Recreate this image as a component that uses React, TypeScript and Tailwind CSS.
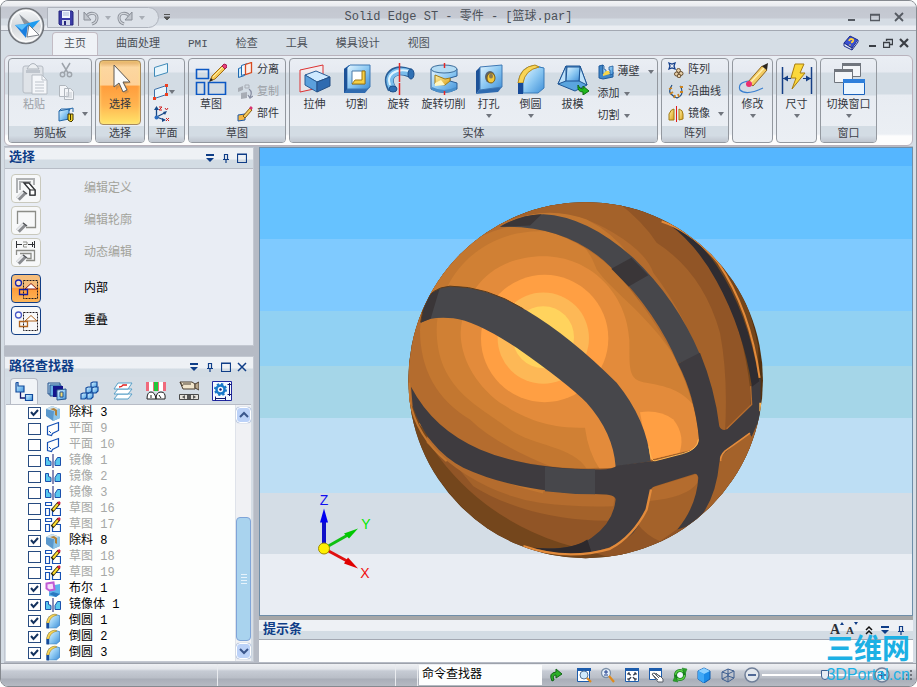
import React, { useState } from 'react';

type IconProps = { className?: string };
type Draw = (props: IconProps) => React.ReactElement;

const SMALL = 'h-4 w-4';

function Svg({ size = 16, className = SMALL, children }: { size?: number; className?: string; children: React.ReactNode }) {
  return (
    <svg viewBox={`0 0 ${size} ${size}`} className={`${className} flex-shrink-0`} fill="none" aria-hidden="true">
      {children}
    </svg>
  );
}

// ---- shared gradients ----
function Gradients() {
  return (
    <svg className="absolute h-0 w-0" aria-hidden="true">
      <defs>
        <linearGradient id="blue" x1="0" y1="0" x2="1" y2="1">
          <stop offset="0" stopColor="#e4f5ff" />
          <stop offset="0.5" stopColor="#8cc8f2" />
          <stop offset="1" stopColor="#3f8fd8" />
        </linearGradient>
        <linearGradient id="gold" x1="0" y1="0" x2="1" y2="1">
          <stop offset="0" stopColor="#fff3a8" />
          <stop offset="1" stopColor="#dba21c" />
        </linearGradient>
        <linearGradient id="silver" x1="0" y1="0" x2="0" y2="1">
          <stop offset="0" stopColor="#f6f8fa" />
          <stop offset="0.5" stopColor="#d4d8dc" />
          <stop offset="1" stopColor="#f4f4f4" />
        </linearGradient>
      </defs>
    </svg>
  );
}

// ---- title bar icons ----
const LogoIcon: Draw = () => (
  <svg viewBox="0 0 38 38" className="h-[38px] w-[38px]" aria-hidden="true">
    <circle cx="19" cy="19" r="17.5" fill="url(#silver)" stroke="#73777d" strokeWidth="1.6" />
    <circle cx="19" cy="19" r="15.5" fill="none" stroke="#fff" />
    <path d="M12 7l11 9-5 3z" fill="#8d9299" />
    <path d="M18 17l15-4-8 9-4-2z" fill="#1e9cf0" />
    <path d="M8 18l13-1-2 14z" fill="#1a7fe0" />
    <path d="M8 18l13-1-6 6z" fill="#5cc0fa" />
    <path d="M22 18l10 10-12 2z" fill="#fff" stroke="#60666e" strokeWidth=".8" />
  </svg>
);

const SaveIcon: Draw = () => (
  <Svg>
    <path d="M1 1h13l1 1v13H2l-1-1z" fill="#3c3ca8" stroke="#25257c" />
    <path d="M4 1h8v7H4z" fill="#f2f6ff" />
    <path d="M5 3h6M5 5h6" stroke="#a9b6d8" />
    <path d="M4 10h8v5H4z" fill="#d3d9ea" />
    <path d="M6 11h2v4H6z" fill="#25257c" />
  </Svg>
);

const UndoIcon: Draw = ({ className = SMALL }) => (
  <Svg className={className}>
    <path d="M3 7c4-6 11-4 11 1 0 3-2 5-5 6" stroke="#8a8f98" strokeWidth="3" />
    <path d="M3 7c4-6 11-4 11 1 0 3-2 5-5 6" stroke="#d2d6dc" strokeWidth="1.2" />
    <path d="M1 2v8h7z" fill="#c2c7ce" stroke="#8a8f98" />
  </Svg>
);

const HelpIcon: Draw = () => (
  <Svg>
    <path d="M1 8l6-7 8 4-6 8z" fill="#3b50d0" stroke="#1b2b8c" />
    <path d="M1 8v3l8 4v-2zM9 15l6-8V5" fill="#dfe6f6" stroke="#1b2b8c" />
    <path d="M6 6q1-3 4-1.500q1 2-2 3M7 9.500v1" stroke="#ffd23c" strokeWidth="1.800" />
  </Svg>
);

// ---- ribbon icons, large ----
const PasteIcon: Draw = () => (
  <Svg size={32} className="h-8 w-8">
    <rect x="5" y="3" width="20" height="27" rx="2" fill="#dfe3e8" stroke="#b5bbc3" />
    <path d="M8 7h14v3H8z" fill="#bfc5cd" />
    <path d="M11 3q4-5 8 0l2 3H9z" fill="#eceff2" stroke="#aeb4bc" />
    <path d="M14 12h10l5 5v14H14z" fill="#f5f7fa" stroke="#b5bbc3" />
    <path d="M24 12v5h5M17 19h9M17 22h9M17 25h9M17 28h9" stroke="#bdc3cb" />
  </Svg>
);

const ArrowIcon: Draw = () => (
  <Svg size={32} className="h-8 w-8">
    <path d="M11 3v23l5-5 4 9 4-2-4-8 6-1z" fill="#c88a46" opacity=".6" transform="translate(1 1)" />
    <path d="M10 2v22l5-4 4 9 4-2-4-8h7z" fill="#fafafa" stroke="#5e5a55" />
  </Svg>
);

const Pencil = () => (
  <g>
    <path d="M15 18l2-5L28 2l3 3-11 11z" fill="#f6cb5a" stroke="#a06a12" />
    <path d="M18 14L28 4" stroke="#fff0a8" />
    <path d="M27 3l2-2q3 0 3 3l-2 2z" fill="#e8407c" stroke="#a52050" />
    <path d="M14 19l2-4 2 2z" fill="#222" />
  </g>
);

const SketchIcon: Draw = () => (
  <Svg size={32} className="h-8 w-8">
    <path d="M1.500 6.500h12v9h-12zM1.500 19.500h8v12h-8zM13.500 19.500h17v12h-17z" stroke="#0c58c4" strokeWidth="1.600" />
    <Pencil />
  </Svg>
);

const ExtrudeIcon: Draw = () => (
  <Svg size={32} className="h-8 w-8">
    <path d="M1 7l23-5v22L1 29z" fill="#fdeeee" fillOpacity=".5" stroke="#dc3232" />
    <path d="M6 12l11-4 14 6-13 5z" fill="#cfeaff" stroke="#2b5f98" />
    <path d="M6 12l12 7v10L6 22z" fill="#5ba0dc" stroke="#2b5f98" />
    <path d="M18 19l13-5v9l-13 6z" fill="#2f6bb0" stroke="#244f84" />
  </Svg>
);

const CutIcon: Draw = () => (
  <Svg size={32} className="h-8 w-8">
    <path d="M3 6l5-4h21v22l-5 6H3z" fill="#2f6bb0" />
    <path d="M6 5l3-3h20v22l-3 2H6z" fill="url(#blue)" stroke="#3f78b4" />
    <path d="M3 6l3-2v22l-3 4z" fill="#1d5298" />
    <path d="M11 8h13v13H11z" fill="#fff" stroke="#4a7aa8" />
    <path d="M11 21l3-4h7V8h3v13z" fill="#f6cf44" stroke="#a27b14" />
  </Svg>
);

const RevolveIcon: Draw = () => (
  <Svg size={32} className="h-8 w-8">
    <path d="M9 26C1 12 12 4 27 10" stroke="#2a5f98" strokeWidth="9" />
    <path d="M9 25C2 13 12 5 27 10" stroke="#79bdec" strokeWidth="7" />
    <path d="M7 22C3 12 12 5 26 8" stroke="#dff4ff" strokeWidth="2" />
    <ellipse cx="28" cy="11" rx="3" ry="5" fill="#2f70b4" stroke="#1d4f8a" />
    <ellipse cx="10" cy="26" rx="4" ry="3" fill="#2f70b4" stroke="#1d4f8a" />
    <path d="M16.500 0v19M16.500 20v12" stroke="#e42828" strokeWidth="1.500" />
  </Svg>
);

const RevolveCutIcon: Draw = () => (
  <Svg size={32} className="h-8 w-8">
    <path d="M3 6v20q13 7 26 0v-6l-7-2v-3l7-2V6z" fill="url(#blue)" stroke="#2a5f98" />
    <ellipse cx="16" cy="6" rx="13" ry="4" fill="#b5dcf4" stroke="#3d6e9c" />
    <path d="M7 12l10 4 5-1v3l-5 4-10-1z" fill="url(#gold)" stroke="#a27b14" />
    <path d="M7 20l6-3 4 5-10 1z" fill="#fff6c0" />
    <path d="M4 24q12 6 24 0v3q-12 6-24 0z" fill="#4a8fca" />
    <path d="M16.500 0v5M16.500 28v4" stroke="#e42828" strokeWidth="1.500" />
  </Svg>
);

const HoleIcon: Draw = () => (
  <Svg size={32} className="h-8 w-8">
    <path d="M3 8l4-4v22l-4 5z" fill="#1d5298" />
    <path d="M3 31l4-5 22-2-4 5z" fill="#2f6bb0" />
    <path d="M7 4l22-2v22L7 27z" fill="url(#blue)" stroke="#3f78b4" />
    <ellipse cx="17" cy="14" rx="5" ry="6" fill="#59636e" />
    <ellipse cx="18" cy="15" rx="4" ry="5" fill="#f3c93c" stroke="#7e6013" />
    <ellipse cx="18" cy="13" rx="2" ry="2.500" fill="#8a7a50" />
  </Svg>
);

const RoundIcon: Draw = ({ className = 'h-8 w-8' }) => (
  <Svg size={32} className={className}>
    <path d="M3 30V18Q6 3 20 2l9 3v20l-9 5z" fill="#2f78c0" />
    <path d="M8 30V18Q10 6 24 4l5 1v20l-6 5z" fill="url(#blue)" stroke="#3a7cba" />
    <path d="M3 20Q5 4 20 2l4 2Q10 7 8 20z" fill="#f9d556" stroke="#b98c1c" />
    <path d="M3 20h5v11H3z" fill="#174a98" />
  </Svg>
);

const DraftIcon: Draw = () => (
  <Svg size={32} className="h-8 w-8">
    <path d="M9 3h14l7 19-12 6L1 21z" fill="#5aa5de" stroke="#1e5594" />
    <path d="M9 3L1 21l8-3zM23 3l7 19-8-4z" fill="#bfe2fa" stroke="#1e5594" />
    <path d="M10 4h13l-1 14H9z" fill="url(#blue)" stroke="#1e5594" />
    <path d="M21 22q1 4 5 4v-3l6 5-6 4v-3q-6 0-5-7z" fill="#20b81c" stroke="#0c6c10" />
  </Svg>
);

const ModifyIcon: Draw = () => (
  <Svg size={32} className="h-8 w-8">
    <path d="M13 18Q0 19 3 27q6 6 23-2" stroke="#3a80d0" strokeWidth="1.200" />
    <path d="M11 19L25 3l5 4-14 16z" fill="#f3cb62" stroke="#8e6620" />
    <path d="M13 20L27 5" stroke="#fff0b0" strokeWidth="1.500" />
    <path d="M25 3l6-3-1 7z" fill="#2b2620" />
    <circle cx="12" cy="21" r="3" fill="#ea3070" />
  </Svg>
);

const DimensionIcon: Draw = () => (
  <Svg size={32} className="h-8 w-8">
    <path d="M1.500 4v27M30.500 4v27" stroke="#153f86" strokeWidth="1.500" />
    <path d="M2 15.500h8M22 15.500h8" stroke="#153f86" />
    <path d="M2 15.500l5-3v6zM30 15.500l-5-3v6z" fill="#153f86" />
    <path d="M14 1h9l-4 9h5L11 26l4-11H10z" fill="#fbd83c" stroke="#a87c10" />
  </Svg>
);

const WindowsIcon: Draw = () => (
  <Svg size={32} className="h-8 w-8">
    <path d="M9.500 1.500h18v12h-18z" fill="#f3f5f8" stroke="#70757d" />
    <path d="M9 0h19v3H9z" fill="#70757d" />
    <path d="M1.500 7.500h18v12h-18z" fill="#f3f5f8" stroke="#70757d" />
    <path d="M1 6h19v3H1z" fill="#70757d" />
    <path d="M10.500 17.500h21v14h-21z" fill="#eaf5ff" stroke="#1b62bc" />
    <path d="M10 16h22v4H10z" fill="#2f80dc" />
  </Svg>
);

// ---- ribbon icons, small ----
const ScissorsIcon: Draw = () => (
  <Svg>
    <path d="M4 1l6 10M12 1L6 11" stroke="#9ea4ab" strokeWidth="1.500" />
    <circle cx="4.500" cy="12.500" r="2.200" stroke="#9ea4ab" strokeWidth="1.400" />
    <circle cx="11.500" cy="12.500" r="2.200" stroke="#9ea4ab" strokeWidth="1.400" />
  </Svg>
);

const CopyIcon: Draw = () => (
  <Svg>
    <path d="M1.500 1.500h6l3 3v8h-9zM6.500 4.500h6l3 3v8h-9z" fill="#f3f5f8" stroke="#b0b6bd" />
    <path d="M8 9h6M8 11h6M8 13h6" stroke="#c4c9cf" />
  </Svg>
);

const PartToolIcon: Draw = () => (
  <Svg>
    <path d="M1 5l10-2v10L1 15z" fill="url(#blue)" stroke="#2267a8" />
    <path d="M1 5l2-2h9l-1 2M11 3l4-1v4" stroke="#2267a8" />
    <path d="M10 8h5v6l-2 2-3-2z" fill="#f7d62c" stroke="#3e3500" />
    <path d="M12.500 8v6" stroke="#3e3500" />
  </Svg>
);

const PlaneIcon: Draw = () => (
  <Svg>
    <path d="M1.500 5.500l13-4v9l-13 4z" fill="#e8f5fc" stroke="#3f8ab8" />
  </Svg>
);

const PointPlaneIcon: Draw = () => (
  <Svg>
    <path d="M1.500 5.500l12-4v9l-12 4z" fill="#e8f5fc" stroke="#3b6fa8" />
    <path d="M12 0h3v3h-3zM12 9h3v3h-3zM0 13h3v3H0z" fill="#f04020" />
  </Svg>
);

const CsysIcon: Draw = () => (
  <Svg>
    <path d="M3.500 12V3M3.500 11l8-4M3.500 11l8 3" stroke="#174888" strokeWidth="1.300" />
    <path d="M1 4l2.500-4L6 4zM10 6l4-1-2 4zM9 12l4 2-4 2z" fill="#174888" />
    <circle cx="3.500" cy="11.500" r="2" fill="#2b6cc0" />
    <path d="M6 1h3L6 4h3M12 2l1.500 2L15 2M13 12l3 3M16 12l-3 3" stroke="#d02020" />
  </Svg>
);

const SeparateIcon: Draw = () => (
  <Svg>
    <path d="M1.500 6.500l6-2v9l-6 2z" fill="#cfeafa" stroke="#1d68b0" />
    <path d="M4.500 3.500l6-2v10l-6 2z" fill="#eef8ff" stroke="#1d68b0" />
    <path d="M8.500 2.500l6-2v10l-6 2z" fill="#fdeee8" stroke="#d64a20" strokeWidth="1.300" />
  </Svg>
);

const DuplicateIcon: Draw = () => (
  <Svg>
    <path d="M1 4l5-2v4L1 8zM4 9l6-1v6l-6 1z" fill="#a8adb5" />
    <path d="M8 1h4v3H8z" stroke="#a8adb5" />
    <path d="M12 5q4 3 1 8M11 11l2 3 3-2" stroke="#8a90a4" strokeWidth="1.300" />
  </Svg>
);

const PartIcon: Draw = () => (
  <Svg>
    <path d="M1 9l7-1v6l-7 1z" fill="#f5b642" stroke="#1b57a8" />
    <path d="M6 10l7-8 2 2-7 8z" fill="#f6cb5a" stroke="#8a5c10" />
    <path d="M13 1l2 2" stroke="#d83070" strokeWidth="2.500" />
  </Svg>
);

const ThinWallIcon: Draw = () => (
  <Svg>
    <path d="M1 2l4-1v9l10-2v5L5 15l-4-1z" fill="#3f86c8" stroke="#1f5a9c" />
    <path d="M5 1v9l3-1V6L6 5V2zM11 3l4-1v8l-3 1V6h-1z" fill="url(#blue)" stroke="#1f5a9c" strokeWidth=".8" />
    <path d="M5 10l3-3h3l1 3-7 2z" fill="#f8d548" />
  </Svg>
);

const PatternIcon: Draw = () => (
  <Svg>
    <path d="M1 1l3 1 3-1-1 3 1 3-3-1-3 1 1-3z" stroke="#143f8c" strokeWidth="1.300" />
    <circle cx="10.500" cy="8.500" r="2" fill="#e6cfa8" stroke="#6a5032" />
    <circle cx="8.500" cy="12" r="2" fill="#e6cfa8" stroke="#6a5032" />
    <circle cx="13" cy="11.500" r="2" fill="#e6cfa8" stroke="#6a5032" />
    <circle cx="11" cy="14" r="1.800" fill="#e6cfa8" stroke="#6a5032" />
  </Svg>
);

const AlongCurveIcon: Draw = () => (
  <Svg>
    <path d="M4 1q-4 6-1 9t6 4q5-2 5-6t-2-6" stroke="#1c4a80" strokeWidth="1.200" />
    <path d="M1 5l3-1M2 10l3-2M6 14l1-3M11 13l-1-3M15 8h-3M12 3h3" stroke="#cc8420" strokeWidth="1.800" />
  </Svg>
);

const MirrorIcon: Draw = () => (
  <Svg>
    <path d="M1 14V8q2-5 5-5v11z" fill="url(#gold)" stroke="#a27b14" />
    <path d="M11 3q4 1 4 5v5l-4 1z" fill="url(#gold)" stroke="#a27b14" />
    <path d="M8.500 0v16" stroke="#e01818" />
  </Svg>
);

// ---- selection panel icons ----
const Finger = () => (
  <g>
    <path d="M4 22l7-7" stroke="#8a8c90" strokeWidth="5" />
    <path d="M3 21l7-7" stroke="#e8eaec" strokeWidth="2" />
    <path d="M9 14l4 3" stroke="#55585c" strokeWidth="1.500" />
  </g>
);

const EditDefinitionIcon: Draw = () => (
  <Svg size={24} className="h-6 w-6">
    <path d="M3 16V2h17v6M6 13V5h11" stroke="#b0b2b4" strokeWidth="2" />
    <path d="M10 6h5l6 7v5h-5v-5z" fill="#fff" stroke="#303236" strokeWidth="1.400" />
    <path d="M16 13h5v5h-5z" fill="#fff" stroke="#303236" strokeWidth="1.200" />
    <Finger />
  </Svg>
);

const EditProfileIcon: Draw = () => (
  <Svg size={24} className="h-6 w-6">
    <path d="M3.500 15V2.500h18v16H12" stroke="#8c8d88" strokeWidth="1.300" />
    <Finger />
  </Svg>
);

const DynamicEditIcon: Draw = () => (
  <Svg size={24} className="h-6 w-6">
    <path d="M2.500 0v7M20.500 0v7M18.500 1v5M2 3.500h6M14 3.500h6" stroke="#303236" />
    <path d="M9 1h4v2.500H9.500V6H13" stroke="#8c8d88" />
    <path d="M2.500 14V9.500h18v10H12M6 12.500h11v5h-4" stroke="#8c8d88" strokeWidth="1.300" />
    <Finger />
  </Svg>
);

function FenceShape({ circle, box, lines }: { circle: string; box: string; lines: string }) {
  return (
    <Svg size={28} className="h-7 w-7">
      <circle cx="6.500" cy="8" r="3" fill="#fff" fillOpacity=".5" stroke={circle} strokeWidth="1.300" />
      <path d="M11.500 5.500h14v18h-14z" stroke="#1f1a20" strokeDasharray="2 1" />
      <path d="M19 8.500l6 5.500H13z" fill="#fff" stroke={lines} />
      <path d="M7.500 14.500h8v5h-8z" stroke={box} strokeWidth="1.300" />
    </Svg>
  );
}
const InsideIcon: Draw = () => <FenceShape circle="#1a24b0" box="#141c9c" lines="#8c1a10" />;
const OverlapIcon: Draw = () => <FenceShape circle="#4a5ac8" box="#ae6420" lines="#ae6420" />;

// ---- pathfinder tab icons ----
const TreeTabIcon: Draw = () => (
  <Svg size={20} className="h-5 w-5">
    <path d="M6.500 9v7H12" stroke="#101870" strokeWidth="1.300" />
    <path d="M2 1l2-1v4h6v6H2z" fill="url(#blue)" stroke="#124a9c" strokeWidth="1.200" />
    <path d="M11.500 12.500h7v6h-7z" fill="url(#blue)" stroke="#124a9c" strokeWidth="1.200" />
  </Svg>
);
const LibraryTabIcon: Draw = () => (
  <Svg size={20} className="h-5 w-5">
    <path d="M1 2h12v11H1z" fill="#b6d8f0" stroke="#26538c" />
    <path d="M3 4h11v11H3z" fill="#69b0e4" stroke="#26538c" />
    <path d="M6 5h10v11H6z" fill="#15158c" />
    <path d="M10 9l9-1v10l-9 1z" fill="url(#blue)" stroke="#26538c" />
    <path d="M13 11h3v5h-3z" fill="#f5dc70" stroke="#26538c" />
  </Svg>
);
const FamilyTabIcon: Draw = () => (
  <Svg size={20} className="h-5 w-5">
    {[[12, 1], [7, 6], [13, 6], [2, 12], [8, 12]].map(([x, y]) => (
      <path key={`${x}-${y}`} d={`M${x - 1} ${y + 1}l2-1h4v4l-2 2h-4z`} fill="url(#blue)" stroke="#124a9c" strokeWidth="1.200" />
    ))}
  </Svg>
);
const LayersTabIcon: Draw = () => (
  <Svg size={20} className="h-5 w-5">
    <path d="M1 18l4-5h14l-4 5z" fill="#fff" stroke="#58a0c8" />
    <path d="M1 13l4-5h14l-4 5z" fill="#fff" stroke="#58a0c8" />
    <path d="M1 8l4-6h14l-4 6z" fill="#fff" stroke="#58a0c8" />
    <path d="M6 6q3 0 4-2h4" stroke="#e02020" strokeWidth="1.500" />
  </Svg>
);
const SensorTabIcon: Draw = () => (
  <Svg size={20} className="h-5 w-5">
    <path d="M0 1h20v9H0z" fill="#f06a7c" />
    <path d="M3 1h4v9H3zM13 1h4v9h-4z" fill="#fff" />
    <path d="M8 1h4v9H8z" fill="#22c83a" />
    <path d="M1 18q0-7 4-7t5 7zM10 18q0-7 5-7t4 7z" fill="#fff" stroke="#202020" />
    <path d="M5 17v-3M15 17l-2-3" stroke="#202020" />
  </Svg>
);
const CameraTabIcon: Draw = () => (
  <Svg size={20} className="h-5 w-5">
    <path d="M1 1h12l3 2v5H4z" fill="#f2e6cc" stroke="#4a3e30" />
    <path d="M4 3h8M1 1l3 4" stroke="#4a3e30" />
    <path d="M16 3l4-2v8l-4-2z" fill="#b8a68a" stroke="#4a3e30" />
    <path d="M.500 13.500h19v5H.500z" fill="#e6e2da" stroke="#4a4a4a" />
    <path d="M3 16l3-2v4zM17 16l-3-2v4zM8 14h4v4H8z" fill="#555" />
  </Svg>
);
const GearTabIcon: Draw = () => (
  <Svg size={20} className="h-5 w-5">
    <path d="M.500.500h19v19H.500z" fill="#f4f9ff" stroke="#2028a0" />
    <circle cx="8.500" cy="8.500" r="4" stroke="#1878c8" strokeWidth="2.500" />
    <circle cx="8.500" cy="8.500" r="5.500" stroke="#1878c8" strokeWidth="2" strokeDasharray="2.300 2" />
    <circle cx="8.500" cy="8.500" r="1.200" fill="#101870" />
    <path d="M17.500 2v13M14 17.500H3M3.500 15.500v4M13.500 15.500v4M15.500 3.500h4M15.500 13.500h4" stroke="#101870" />
  </Svg>
);

// ---- tree icons ----
const CutoutNode: Draw = () => (
  <Svg>
    <path d="M1 4l6-3 8 3v9l-7 3-7-5z" fill="#5a98cc" />
    <path d="M1 4l6-3 8 3-6 2z" fill="#cfe3ee" />
    <path d="M9 6l6-2v9l-7 3z" fill="#8cc4e8" />
    <path d="M5 4l4-1 3 2v6l-2-1V6z" fill="#b08038" />
  </Svg>
);
const PlaneNode: Draw = () => (
  <Svg>
    <path d="M2.500 5.500l11-4v8l-6 3-1 2-4-1z" stroke="#1450b4" strokeWidth="1.200" />
    <path d="M4 10l2 2" stroke="#1450b4" />
  </Svg>
);
const MirrorNode: Draw = () => (
  <Svg>
    <path d="M.500 4.500h3v3l2.500 1v4H.500zM15.500 4.500h-3l-2.500 4v4h5.500z" fill="#58c8ee" stroke="#1b50ac" />
    <path d="M8 1v14" stroke="#101870" />
  </Svg>
);
const SketchNode: Draw = () => (
  <Svg>
    <path d="M.500 1.500h6v3h-6zM.500 7.500h4v7h-4zM7.500 7.500h8v7h-8z" stroke="#1450b4" strokeWidth="1.200" />
    <path d="M7 10l7-8" stroke="#2a2000" strokeWidth="3.500" />
    <path d="M8 9l5-6" stroke="#fbdc30" strokeWidth="2" />
    <path d="M13 3l2-2" stroke="#d02040" strokeWidth="2.500" />
  </Svg>
);
const BooleanNode: Draw = () => (
  <Svg>
    <path d="M4 5l11-2v10l-4 3-7-1z" fill="#5cb4ec" />
    <path d="M4 13l7 3 4-3-7-2z" fill="#2878c0" />
    <path d="M1.500 2.500l7-1 1 7-5 1-3-2z" fill="#f6dcfa" stroke="#c05cd4" strokeWidth="2" />
  </Svg>
);
const RoundNode: Draw = () => <RoundIcon className="h-4 w-4" />;

// ---- window / panel controls ----
const Caret = ({ color = '#70757d' }: { color?: string }) => (
  <svg viewBox="0 0 6 4" className="h-1 w-1.5 flex-shrink-0" aria-hidden="true">
    <path d="M0 0h6L3 4z" fill={color} />
  </svg>
);
const MenuGlyph = () => (
  <Svg size={10} className="h-2.5 w-2.5">
    <path d="M1 1h8v2H1zM1 5h8L5 9z" fill="#0f3d87" />
  </Svg>
);
const PinGlyph = () => (
  <Svg size={10} className="h-2.5 w-2.5">
    <path d="M3.500 1v5M6.500 1v5M3 1.500h4M2 6.500h6M5 6v4" stroke="#0f3d87" strokeWidth="1.200" />
  </Svg>
);
const MaxGlyph = () => (
  <Svg size={10} className="h-2.5 w-2.5">
    <path d="M.500 1.500h9v8h-9zM0 1h10" stroke="#0f3d87" strokeWidth="1.200" />
  </Svg>
);
const CloseGlyph = ({ color = '#0f3d87', width = 1.5 }: { color?: string; width?: number }) => (
  <Svg size={10} className="h-2.5 w-2.5">
    <path d="M1 1l8 8M9 1L1 9" stroke={color} strokeWidth={width} />
  </Svg>
);

// ---- status bar icons ----
const RepeatIcon: Draw = () => (
  <Svg>
    <path d="M4 14Q0 6 8 5V2l6 5-6 4V8q-4 0-2 5z" fill="#2cae28" stroke="#0f6414" />
  </Svg>
);
const ZoomAreaIcon: Draw = () => (
  <Svg>
    <path d="M1.500 2.500h12v12h-12z" fill="#fff" stroke="#1c5cac" />
    <path d="M1 1h14v3H1z" fill="#1c5cac" />
    <circle cx="8" cy="8" r="4" fill="#cfeafc" stroke="#5a7898" />
    <path d="M11 11l4 4" stroke="#e08a1c" strokeWidth="2.200" />
  </Svg>
);
const ZoomIcon: Draw = () => (
  <Svg>
    <circle cx="6" cy="6" r="4.500" fill="#e6f0fa" stroke="#7c90a8" strokeWidth="1.300" />
    <path d="M6 3v4M4 5h4M4 8h4" stroke="#1c3c8c" />
    <path d="M9 9l5 6" stroke="#e08a1c" strokeWidth="2.200" />
  </Svg>
);
const FitIcon: Draw = () => (
  <Svg>
    <path d="M1.500 2.500h13v12h-13z" fill="#fff" stroke="#1c5cac" />
    <path d="M1 1h14v3H1z" fill="#1c5cac" />
    <path d="M4 6l8 7M12 6l-8 7" stroke="#303848" strokeDasharray="3.500 3" strokeWidth="1.300" />
    <path d="M4 8V6h2M10 6h2v2M4 11v2h2M10 13h2v-2" stroke="#303848" />
  </Svg>
);
const PanIcon: Draw = () => (
  <Svg>
    <path d="M1.500 2.500h12v10h-12z" fill="#fff" stroke="#1c5cac" />
    <path d="M1 1h13v3H1z" fill="#1c5cac" />
    <path d="M4 7l2-1 6 3 3 3v3h-5z" fill="#fff" stroke="#5a5f68" />
    <path d="M4 7l6 6M6 6l5 5M8 6l4 4" stroke="#5a5f68" />
  </Svg>
);
const RotateIcon: Draw = () => (
  <Svg>
    <circle cx="8" cy="8" r="4.500" fill="#f2f7ff" stroke="#17801c" strokeWidth="3" />
    <circle cx="8" cy="8" r="4.500" stroke="#5cd048" strokeWidth="1.500" strokeDasharray="10 4" />
    <path d="M10 1l5 1-2 5zM6 15l-5-1 2-5z" fill="#2ca028" stroke="#17801c" strokeWidth=".5" />
  </Svg>
);
const CubeIcon: Draw = () => (
  <Svg>
    <path d="M8 1l6 3v8l-6 4-6-4V4z" fill="#1c8ce8" stroke="#0e5cb0" />
    <path d="M8 1l6 3-6 3-6-3z" fill="#8cd0ff" />
    <path d="M2 4l6 3v9l-6-4z" fill="#40a8f6" />
  </Svg>
);
const WireCubeIcon: Draw = () => (
  <Svg>
    <path d="M2 5l6 2 6-3-6-2zM2 5v7l6 3V7M8 15l6-4V4M8 2v7l6 2M8 9l-6 3" stroke="#3f5f90" />
  </Svg>
);

// ---- ribbon pieces ----
const groupClass =
  'flex flex-shrink-0 flex-col overflow-hidden rounded border border-[#93989f] bg-[linear-gradient(#eaeef4_0,#e6eaf1_13px,#d3dce4_14px,#d3dce4_36px,#e8ecf2_37px,#ebeff4_100%)]';

function Group({ label, width, children }: { label?: string; width: string; children: React.ReactNode }) {
  return (
    <section className={`${groupClass} ${width}`}>
      <div className="flex min-h-0 flex-1 justify-center">{children}</div>
      {label && (
        <div className="h-4 bg-[linear-gradient(#d3dce4_60%,#bfc5cf)] text-center text-[11px] leading-4 text-[#3c4048]">{label}</div>
      )}
    </section>
  );
}

function BigButton({ icon: IconC, label, width = 'w-[42px]', pad = 'pt-1', caret, disabled }: {
  icon: Draw; label: string; width?: string; pad?: string; caret?: boolean; disabled?: boolean;
}) {
  return (
    <button className={`flex flex-col items-center ${pad} ${width} ${disabled ? 'text-[#9ba0a6]' : 'text-[#33373e]'}`} disabled={disabled}>
      <IconC />
      <span className="mt-0.5 whitespace-nowrap text-[11px] leading-4">{label}</span>
      {caret && <span className="mt-px"><Caret /></span>}
    </button>
  );
}

function SmallButton({ icon: IconC, label, caret, disabled, name }: {
  icon?: Draw; label?: string; caret?: boolean; disabled?: boolean; name?: string;
}) {
  return (
    <button
      className={`flex h-[22px] items-center gap-1 text-[11px] leading-4 whitespace-nowrap ${disabled ? 'text-[#9ba0a6]' : 'text-[#33373e]'}`}
      disabled={disabled}
      aria-label={label || name}
    >
      {IconC && <IconC />}
      {label && <span>{label}</span>}
      {caret && <span className="ml-1 flex"><Caret /></span>}
    </button>
  );
}

const tabs = ['曲面处理', 'PMI', '检查', '工具', '模具设计', '视图'];

function TitleBar() {
  return (
    <header className="relative flex h-[30px] items-start border-b border-[#a3a8b2] bg-[linear-gradient(#f3f4f6_0,#e9ebef_5px,#c3c7d0_6px,#c6cad3_17px,#d5dce4_18px,#d5dce4_24px,#eaedf2_25px)] pt-1.5 pl-[46px]">
      <button className="absolute top-1.5 left-1.5 z-10" aria-label="应用程序"><LogoIcon /></button>
      <div className="flex h-[21px] w-[112px] items-center rounded-r-full border border-[#aeb3bc] bg-[#dce1e8] pl-2.5 text-[#8a8f98]">
        <button aria-label="保存"><SaveIcon /></button>
        <span className="mr-1 ml-1 h-4 border-l border-[#8a7f90]" />
        <button className="flex items-center gap-1.5" aria-label="撤销"><UndoIcon /><Caret color="#a9aeb6" /></button>
        <button className="ml-1.5 flex items-center gap-1.5" aria-label="重做"><UndoIcon className="h-4 w-4 -scale-x-100" /><Caret color="#a9aeb6" /></button>
      </div>
      <button className="mt-1.5 ml-1" aria-label="自定义"><Svg size={8} className="h-2 w-2"><path d="M1 1.500h6M1 4h6L4 7z" fill="#555" stroke="#555" /></Svg></button>
      <h1 className="flex-1 pr-[100px] text-center text-[12px] leading-5 text-[#4b5058]">Solid Edge ST - 零件 - [篮球.par]</h1>
      <div className="flex h-5 w-[70px] items-center gap-3.5">
        <button aria-label="最小化"><Svg size={10} className="h-2.5 w-2.5"><path d="M2 8h7" stroke="#555a62" strokeWidth="2" /></Svg></button>
        <button aria-label="最大化"><Svg size={10} className="h-2.5 w-2.5"><path d="M.500 2.500h9v6h-9zM0 3h10" stroke="#555a62" strokeWidth="1.300" /></Svg></button>
        <button aria-label="关闭"><CloseGlyph color="#555a62" width={1.8} /></button>
      </div>
    </header>
  );
}

function TabRow() {
  return (
    <nav className="flex h-6 items-center pl-12 text-[11px] text-[#4b5058]">
      <button className="h-[23px] w-[46px] self-end rounded-t border border-b-0 border-[#c3bcc4] bg-[#eff2f6]">主页</button>
      <div className="ml-[18px] flex gap-7 pt-0.5">
        {tabs.map((tab) => (
          <button key={tab}>{tab}</button>
        ))}
      </div>
      <div className="mr-1 ml-auto flex items-center gap-1.5">
        <button className="mr-0.5" aria-label="帮助"><HelpIcon /></button>
        <button aria-label="最小化文档"><Svg size={10} className="h-2.5 w-2.5"><path d="M2 8h7" stroke="#3a3e44" strokeWidth="2" /></Svg></button>
        <button aria-label="还原文档"><Svg size={10} className="h-2.5 w-2.5"><path d="M3.500 3V1.500h6v5H7M.500 4.500h6v5h-6z" stroke="#3a3e44" strokeWidth="1.300" /></Svg></button>
        <button aria-label="关闭文档"><CloseGlyph color="#3a3e44" width={2.2} /></button>
      </div>
    </nav>
  );
}

function Ribbon() {
  return (
    <div className="flex h-[91px] gap-[3px] overflow-hidden rounded-md border border-[#b9b2bc] bg-[linear-gradient(#eaeef4_0,#e6eaf1_16px,#d3dce4_17px,#d3dce4_38px,#e8ecf2_39px,#ebeff4_78px,#fdfdfd_80px)] px-[3px] py-0.5">
      <Group label="剪贴板" width="w-[84px]">
        <BigButton icon={PasteIcon} label="粘贴" width="w-12" disabled />
        <div className="w-8">
          <SmallButton icon={ScissorsIcon} name="剪切" disabled />
          <SmallButton icon={CopyIcon} name="复制" disabled />
          <SmallButton icon={PartToolIcon} name="特征库" caret />
        </div>
      </Group>
      <Group label="选择" width="w-[50px]">
        <div className="mt-px mb-px rounded-sm border border-[#a88a5c] bg-[linear-gradient(#dfa65c_0,#fcd7a0_10%,#fdd198_38%,#ff9d3c_40%,#ffb450_70%,#ffe56a)] shadow-[inset_0_0_3px_#fbe28a]">
          <BigButton icon={ArrowIcon} label="选择" width="w-10" pad="pt-0.5" />
        </div>
      </Group>
      <Group label="平面" width="w-[37px]">
        <div className="w-7">
          <SmallButton icon={PlaneIcon} name="重合面" />
          <button className="flex h-[22px] items-center" aria-label="平行面"><PointPlaneIcon /><Caret /></button>
          <SmallButton icon={CsysIcon} name="坐标系" />
        </div>
      </Group>
      <Group label="草图" width="w-[98px]">
        <BigButton icon={SketchIcon} label="草图" width="w-11" />
        <div className="flex-1 pl-1">
          <SmallButton icon={SeparateIcon} label="分离" />
          <SmallButton icon={DuplicateIcon} label="复制" disabled />
          <SmallButton icon={PartIcon} label="部件" />
        </div>
      </Group>
      <Group label="实体" width="w-[369px]">
        <BigButton icon={ExtrudeIcon} label="拉伸" />
        <BigButton icon={CutIcon} label="切割" />
        <BigButton icon={RevolveIcon} label="旋转" />
        <BigButton icon={RevolveCutIcon} label="旋转切削" width="w-12" />
        <BigButton icon={HoleIcon} label="打孔" caret />
        <BigButton icon={RoundIcon} label="倒圆" caret />
        <BigButton icon={DraftIcon} label="拔模" />
        <div className="w-[60px] pt-0.5 pl-1">
          <SmallButton icon={ThinWallIcon} label="薄壁" caret />
          <button className="flex h-[22px] items-center gap-1 text-[11px] text-[#33373e]">添加<Caret /></button>
          <button className="flex h-[22px] items-center gap-1 text-[11px] text-[#33373e]">切割<Caret /></button>
        </div>
      </Group>
      <Group label="阵列" width="w-[68px]">
        <div className="flex-1 pl-1.5">
          <SmallButton icon={PatternIcon} label="阵列" />
          <SmallButton icon={AlongCurveIcon} label="沿曲线" />
          <SmallButton icon={MirrorIcon} label="镜像" caret />
        </div>
      </Group>
      <Group width="w-[41px]"><BigButton icon={ModifyIcon} label="修改" width="w-10" caret /></Group>
      <Group width="w-[41px]"><BigButton icon={DimensionIcon} label="尺寸" width="w-10" caret /></Group>
      <Group label="窗口" width="w-[57px]"><BigButton icon={WindowsIcon} label="切换窗口" width="w-14" caret /></Group>
    </div>
  );
}

// ---- left column ----
function PanelHeader({ title, closable }: { title: string; closable?: boolean }) {
  return (
    <div className="flex h-5 items-center bg-[linear-gradient(#eef1f5_55%,#d3dce4_60%)] pr-1.5 pl-1">
      <h2 className="flex-1 text-[13px] leading-5 font-bold text-[#0f3d87]">{title}</h2>
      <div className="flex gap-1.5">
        <button aria-label="菜单"><MenuGlyph /></button>
        <button aria-label="固定"><PinGlyph /></button>
        <button aria-label="最大化"><MaxGlyph /></button>
        {closable && <button aria-label="关闭"><CloseGlyph /></button>}
      </div>
    </div>
  );
}

const commands: { label: string; icon: Draw; state: string }[] = [
  { label: '编辑定义', icon: EditDefinitionIcon, state: 'disabled' },
  { label: '编辑轮廓', icon: EditProfileIcon, state: 'disabled' },
  { label: '动态编辑', icon: DynamicEditIcon, state: 'disabled' },
  { label: '内部', icon: InsideIcon, state: 'active' },
  { label: '重叠', icon: OverlapIcon, state: 'normal' },
];

const boxStyles: Record<string, string> = {
  disabled: 'border-[#c9c9bd] bg-[#f7f8f9]',
  active: 'border-[#123f86] bg-[linear-gradient(#f5bd7c_45%,#ff9c3a_50%,#fcb65a)]',
  normal: 'border-[#123f86] bg-[#f7f8f9]',
};

function SelectPanel() {
  return (
    <section className="border border-[#c3c8d1] bg-[#e9edf4] pb-2.5">
      <PanelHeader title="选择" />
      <div className="flex flex-col gap-[3px] border-t border-[#b7bcc6] px-1.5 pt-[5px]">
        {commands.map((c) => (
          <button
            key={c.label}
            disabled={c.state === 'disabled'}
            className={`flex items-center gap-[43px] text-left text-[12px] leading-4 ${c.state === 'disabled' ? 'text-[#a3a39b]' : 'text-black'} ${c.state === 'active' ? 'mt-1' : ''}`}
          >
            <span className={`flex h-[29px] w-[30px] items-center justify-center rounded-sm border ${boxStyles[c.state]}`}>
              <c.icon />
            </span>
            {c.label}
          </button>
        ))}
      </div>
    </section>
  );
}

const treeTabs: [string, Draw][] = [
  ['路径查找器', TreeTabIcon],
  ['特征库', LibraryTabIcon],
  ['零件族', FamilyTabIcon],
  ['图层', LayersTabIcon],
  ['传感器', SensorTabIcon],
  ['回放', CameraTabIcon],
  ['工程参考', GearTabIcon],
];

const initialNodes: { name: string; icon: Draw; on: boolean }[] = [
  { name: '除料 3', icon: CutoutNode, on: true },
  { name: '平面 9', icon: PlaneNode, on: false },
  { name: '平面 10', icon: PlaneNode, on: false },
  { name: '镜像 1', icon: MirrorNode, on: false },
  { name: '镜像 2', icon: MirrorNode, on: false },
  { name: '镜像 3', icon: MirrorNode, on: false },
  { name: '草图 16', icon: SketchNode, on: false },
  { name: '草图 17', icon: SketchNode, on: false },
  { name: '除料 8', icon: CutoutNode, on: true },
  { name: '草图 18', icon: SketchNode, on: false },
  { name: '草图 19', icon: SketchNode, on: false },
  { name: '布尔 1', icon: BooleanNode, on: true },
  { name: '镜像体 1', icon: MirrorNode, on: true },
  { name: '倒圆 1', icon: RoundNode, on: true },
  { name: '倒圆 2', icon: RoundNode, on: true },
  { name: '倒圆 3', icon: RoundNode, on: true },
];

function ScrollArrow({ d, label }: { d: string; label: string }) {
  return (
    <button className="flex h-4 items-center justify-center rounded-sm border border-white bg-[#bcd2f8] shadow-[0_0_1px_#5f80b8]" aria-label={label}>
      <Svg size={10} className="h-2.5 w-2.5"><path d={d} stroke="#3a568c" strokeWidth="2" /></Svg>
    </button>
  );
}

function PathFinder() {
  const [nodes, setNodes] = useState(initialNodes);

  const toggleNode = (name: string) => {
    setNodes(nodes.map((n) => (n.name === name ? { ...n, on: !n.on } : n)));
  };

  return (
    <section className="flex flex-1 flex-col border border-[#c3c8d1] bg-[#d5dde5]">
      <PanelHeader title="路径查找器" closable />
      <div className="flex h-[27px] items-end gap-[5px] pl-[5px]">
        {treeTabs.map(([label, IconC], i) => (
          <button
            key={label}
            aria-label={label}
            className={`flex h-[26px] w-7 items-center justify-center ${i === 0 ? 'rounded-t border border-b-0 border-[#b7bcc6] bg-[#f1f4f7]' : ''}`}
          >
            <IconC />
          </button>
        ))}
      </div>
      <div className="mr-0.5 ml-px flex flex-1 border-t border-[#b7bcc6] bg-[#fdfefd]">
        <ul className="flex-1">
          {nodes.map((n) => (
            <li key={n.name}>
              <label className={`flex h-4 items-center pl-[22px] text-[12px] leading-4 ${n.on ? 'text-black' : 'text-[#a6a8a6]'}`}>
                <span className="relative flex">
                  <input
                    type="checkbox"
                    checked={n.on}
                    onChange={() => toggleNode(n.name)}
                    className="h-3 w-[13px] appearance-none border border-[#274b80] bg-white"
                  />
                  {n.on && (
                    <svg viewBox="0 0 13 12" className="pointer-events-none absolute inset-0 h-3 w-[13px]" fill="none">
                      <path d="M3 5l2.500 3L10 3" stroke="#14325e" strokeWidth="2" />
                    </svg>
                  )}
                </span>
                <span className="mr-2 ml-1"><n.icon /></span>
                {n.name}
              </label>
            </li>
          ))}
        </ul>
        <div className="flex w-4 flex-col border-l border-[#dfe3ea] bg-[#f0f1f4] py-0.5">
          <ScrollArrow d="M1 7l4-4 4 4" label="向上滚动" />
          <div className="flex-[97]" />
          <div className="mb-0.5 flex flex-[126] flex-col items-center justify-center gap-0.5 rounded-sm border border-[#7fa4d8] bg-[#a9d3ee]">
            {[0, 1, 2, 3].map((i) => <span key={i} className="h-px w-1.5 bg-[#e6f3fc]" />)}
          </div>
          <ScrollArrow d="M1 3l4 4 4-4" label="向下滚动" />
        </div>
      </div>
    </section>
  );
}

// ---- 3D view ----
function Basketball() {
  return (
    <g>
      <clipPath id="ballClip"><ellipse cx="557" cy="572" rx="532" ry="534" /></clipPath>
      <clipPath id="frontClip"><path d="M0 0V600Q60 700 200 770Q400 850 650 835L900 775C890 600 800 420 640 240Q500 110 310 105Z" /></clipPath>
      <g clipPath="url(#ballClip)">
        <path d="M0 0h1125v1125H0z" fill="#53310f" />
        {/* lower and right shadow bands */}
        <path d="M0 0H780Q1010 160 1075 470L1080 1125H520Q260 1080 110 860L0 700z" fill="#74461c" />
        <path d="M0 0H700Q900 130 985 330Q1040 470 1055 640V1125H700L480 1060Q240 980 100 780z" fill="#915526" />
        <path d="M0 0H600Q720 80 770 160Q910 250 960 430Q985 560 975 730L1090 700V850L830 1020L780 1055Q740 1040 710 1000L620 994Q380 990 220 890L60 700z" fill="#a4622a" />
        <path d="M300 100Q480 30 640 130Q740 190 760 250Q860 380 920 560L880 640L700 300Q560 130 310 105z" fill="#b46c2e" />
        <path d="M330 96Q440 46 560 90Q640 130 690 200L600 130Q480 60 330 96z" fill="#c37730" />
        <path d="M80 740Q200 860 430 900L645 918L640 950Q540 955 420 940Q230 910 80 760zM755 895L893 853V880Q860 925 745 935z" fill="#b46c2e" />
        <path d="M60 700Q180 850 430 908" stroke="#c37730" strokeWidth="8" fill="none" />

        {/* lit front panels */}
        <g clipPath="url(#frontClip)">
          <path d="M0 0h1000v900H0z" fill="#b46c2e" />
          <path d="M60 420Q80 150 380 100L620 110L920 600V800L500 850Q290 770 210 690Q60 600 60 420z" fill="#c37730" />
          <path d="M110 420C115 260 240 125 420 125C520 125 560 160 590 240C640 310 740 370 830 510L900 650V800L560 838C520 770 400 770 330 720C240 650 110 600 110 420Z" fill="#d08034" />
          <path d="M182 430C190 290 290 200 430 200C570 200 680 310 688 450C690 520 680 570 730 578C800 590 850 600 890 660L900 800L600 840Q565 790 555 715C440 715 380 690 300 640C220 580 182 500 182 430Z" fill="#e38b3b" />
          <ellipse cx="434" cy="447" rx="191" ry="191" fill="#ff9f43" />
          <path d="M720 668Q780 660 820 690Q860 740 835 800L750 830z" fill="#ff9f43" />
          <ellipse cx="430" cy="446" rx="137" ry="137" fill="#fdb856" />
          <ellipse cx="430" cy="443" rx="92" ry="93" fill="#ffd35d" />
        </g>

        {/* channels */}
        <path d="M62 400L85 325Q105 292 150 290Q260 290 380 363Q510 440 650 580Q740 690 752 815L647 832Q640 730 560 640Q500 580 350 475Q230 395 160 386Q90 380 62 400z" fill="#47474b" />
        <path d="M62 400L72 345Q90 305 118 300L92 388z" fill="#3a3638" />
        <path d="M62 398L72 345Q90 295 150 290Q260 290 370 358" fill="none" stroke="#5b3b1c" strokeWidth="3" />
        <path d="M300 112Q360 76 430 74Q560 80 700 205Q830 330 900 495L834 523Q770 370 640 240Q510 106 300 112z" fill="#47474b" />
        <path d="M300 112Q360 76 425 74L390 108zM634 238L694 205L745 257L686 291z" fill="#3a3638" />
        <path d="M834 523L900 490Q945 600 958 710Q965 725 980 720L1052 648V590L1082 565V680L1055 742L1048 730L980 785Q962 800 958 820Q950 910 910 970Q880 1010 832 1020Q890 950 895 865Q892 850 880 854L765 890Q750 895 750 910Q740 980 700 1030Q640 1090 500 1097L400 1075Q520 1085 575 1045Q640 1000 647 930Q645 914 600 914Q350 910 190 835Q80 775 38 650L33 592Q100 720 240 780Q380 840 600 840Q640 840 650 829L752 815Q760 820 850 790Q895 780 897 750Q885 620 834 523z" fill="#3e3b3f" />
        <path d="M435 832Q500 840 585 840V914Q510 914 435 905z" fill="#47474b" />
        <path d="M400 1075Q510 1085 562 1050L574 1086Q500 1100 460 1090z" fill="#2d292d" />
        <path d="M805 103Q890 140 950 228Q1045 370 1078 575L1056 592Q1030 420 950 275Q890 165 805 103z" fill="#2f2c31" />
        <path d="M785 96Q875 125 955 220Q1050 360 1079 565" fill="none" stroke="#e38b3b" strokeWidth="6" />
        <path d="M1052 590L1055 645L980 718" fill="none" stroke="#b46c2e" strokeWidth="4" />
        <path d="M1050 731L975 785Q960 800 962 815" fill="none" stroke="#e38b3b" strokeWidth="5" />
        <path d="M747 770Q752 818 765 814L850 792Q893 780 895 750" fill="none" stroke="#fdb856" strokeWidth="3" />
        <path d="M753 900L740 960Q700 1040 630 1078Q500 1115 370 1070" fill="none" stroke="#e38b3b" strokeWidth="7" />
        <path d="M28 580V630Q50 740 140 815" fill="none" stroke="#c37730" strokeWidth="6" />
        <path d="M1082 640V665" stroke="#fdb856" strokeWidth="8" />
      </g>
    </g>
  );
}

function ViewPort() {
  return (
    <div className="min-h-0 flex-1 border border-[#6f8ea8] bg-[linear-gradient(#55b6ff_0_3.8%,#66c2ff_3.8%_19.4%,#7fcaff_19.4%_34.8%,#91d1f3_34.8%_46.6%,#a5d6e8_46.6%_57.8%,#bddef4_57.8%_73.8%,#d4dde6_73.8%_87%,#e9edf3_87%)]">
      <svg viewBox="0 0 652 466" className="block h-full w-full" role="img" aria-label="篮球">
        <g transform="translate(140 41) scale(.3333)"><Basketball /></g>
        <g fontSize="14" fontFamily="Liberation Sans, sans-serif" textAnchor="middle">
          <path d="M64 400V372" stroke="#1010c8" strokeWidth="4" />
          <path d="M60 374l4-14 4 14z" fill="#0000f0" />
          <path d="M64 400l23-13" stroke="#10c010" strokeWidth="3" />
          <path d="M84 385l14-5-9 10z" fill="#00c800" />
          <path d="M64 400l24 13" stroke="#e01010" strokeWidth="3" />
          <path d="M88 409l10 11-14-5z" fill="#e00000" />
          <circle cx="64" cy="400" r="5.500" fill="#fff000" stroke="#a08c00" />
          <text x="64" y="356" fill="#1010f0">Z</text>
          <text x="106" y="380" fill="#00e800">Y</text>
          <text x="105" y="429" fill="#f01010">X</text>
        </g>
      </svg>
    </div>
  );
}

function HintBar() {
  return (
    <section className="border-t-4 border-[#a5a6a6]">
      <div className="flex h-5 items-center border-b border-[#a3a8b2] bg-[linear-gradient(#eef1f5_55%,#d3dce4_60%)] pr-[7px] pl-1">
        <h2 className="flex-1 text-[13px] leading-5 font-bold text-[#0f3d87]">提示条</h2>
        <div className="flex items-center gap-1.5 text-[#2b2f36]">
          <button className="flex font-['Liberation_Serif',serif] text-[14px] leading-4 font-bold" aria-label="增大字体">A<Svg size={4} className="h-1 w-1"><path d="M0 3l2-3 2 3z" fill="#0f3d87" /></Svg></button>
          <button className="-ml-1 flex font-['Liberation_Serif',serif] text-[11px] leading-4 font-bold" aria-label="减小字体">A<Svg size={4} className="h-1 w-1"><path d="M0 0h4L2 3z" fill="#0f3d87" /></Svg></button>
          <button aria-label="折叠"><Svg size={10} className="h-2.5 w-2.5"><path d="M2 5l3-3 3 3M2 9l3-3 3 3" stroke="#111" strokeWidth="1.500" /></Svg></button>
          <button aria-label="菜单"><MenuGlyph /></button>
          <button aria-label="固定"><PinGlyph /></button>
        </div>
      </div>
      <div className="h-[22px] bg-[#fdfefe]" />
    </section>
  );
}

const viewTools: [string, Draw][] = [
  ['区域缩放', ZoomAreaIcon],
  ['缩放', ZoomIcon],
  ['适合', FitIcon],
  ['平移', PanIcon],
  ['旋转', RotateIcon],
  ['着色', CubeIcon],
  ['线框', WireCubeIcon],
];

function RoundButton({ d, label }: { d: string; label: string }) {
  return (
    <button aria-label={label}>
      <Svg>
        <circle cx="8" cy="8" r="7" fill="#e2e7ed" stroke="#707f98" strokeWidth="1.500" />
        <path d={d} stroke="#2c4a80" strokeWidth="1.600" />
      </Svg>
    </button>
  );
}

function StatusBar() {
  const [zoom, setZoom] = useState(58);

  return (
    <footer className="relative flex h-[23px] items-center border-t border-[#9da2ab] bg-[linear-gradient(#eef0f3_0,#e2e5ea_5px,#c6cbd4_7px,#b9bec7_14px,#a9aeb8_15px,#b5bac3)] pr-1">
      <div className="h-full w-[217px] border-r border-[#e9ebef]" />
      <div className="h-full flex-1 border-r border-[#e9ebef]" />
      <div className="mr-px h-full w-[22px] border-r border-[#e9ebef]" />
      <input
        type="text"
        defaultValue="命令查找器"
        aria-label="命令查找器"
        className="h-5 w-[123px] bg-[#fdfefe] px-[3px] pb-1 text-[12px] leading-4 text-black"
      />
      <button className="mr-3 ml-1.5" aria-label="重复"><RepeatIcon /></button>
      <div className="flex gap-2">
        {viewTools.map(([label, IconC]) => (
          <button key={label} aria-label={label}><IconC /></button>
        ))}
      </div>
      <div className="ml-2 flex items-center">
        <RoundButton d="M4 8h8" label="缩小" />
        <input
          type="range"
          min={0}
          max={100}
          value={zoom}
          onChange={(e) => setZoom(Number(e.target.value))}
          aria-label="缩放比例"
          className="mx-0.5 h-0.5 w-[110px] appearance-none bg-white [&::-webkit-slider-thumb]:h-2.5 [&::-webkit-slider-thumb]:w-2 [&::-webkit-slider-thumb]:appearance-none [&::-webkit-slider-thumb]:rounded-b-full [&::-webkit-slider-thumb]:border [&::-webkit-slider-thumb]:border-[#3f6090] [&::-webkit-slider-thumb]:bg-[#e6ecf4]"
        />
        <RoundButton d="M4 8h8M8 4v8" label="放大" />
      </div>
      <Svg size={10} className="ml-3 h-2.5 w-2.5">
        <path d="M8 0h2v2H8zM4 4h2v2H4zM8 4h2v2H8zM0 8h2v2H0zM4 8h2v2H4zM8 8h2v2H8z" fill="#6f747d" />
      </Svg>
      <div className="pointer-events-none absolute right-1.5 bottom-0.5 text-right text-[#1cb0e4]">
        <div className="font-['Liberation_Sans','Noto_Sans_CJK_SC',sans-serif] text-[28px] leading-8 font-bold">三维网</div>
        <div className="font-['Liberation_Sans',sans-serif] text-[16px] leading-[18px]">3DPortal.cn</div>
      </div>
    </footer>
  );
}

function App() {
  return (
    <div className="bg-white font-['Liberation_Mono','Noto_Sans_CJK_SC',monospace]">
      <Gradients />
      <div className="flex min-h-screen flex-col overflow-hidden rounded-lg border border-[#85898f] bg-[#d5dde5]">
        <TitleBar />
        <div className="flex flex-1 flex-col px-[3px]">
          <TabRow />
          <Ribbon />
          <main className="flex flex-1 bg-[#b6bbc5] pt-px pb-px">
            <aside className="flex w-[250px] flex-col gap-2.5">
              <SelectPanel />
              <PathFinder />
            </aside>
            <div className="ml-[5px] flex flex-1 flex-col">
              <ViewPort />
              <HintBar />
            </div>
          </main>
        </div>
        <StatusBar />
      </div>
    </div>
  );
}

export default App;
